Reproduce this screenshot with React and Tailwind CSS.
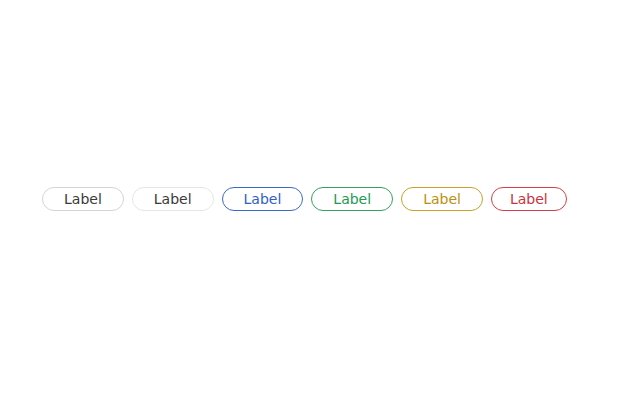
import React from "react";

const pills = [
  { cls: "border-[#d4d4d4] text-[#3a3a3a] px-[21px]" },
  { cls: "border-[#e6e6e6] text-[#3a3a3a] px-[21px]" },
  { cls: "border-[#3a69c6] text-[#3062c2] px-[21px]" },
  { cls: "border-[#34a160] text-[#229a54] px-[21px]" },
  { cls: "border-[#c9a12a] text-[#bb900f] px-[21px]" },
  { cls: "border-[#cf4049] text-[#c8343e] px-[18px]" },
];

const App = () => {
  return (
    <div
      className="w-[625px] h-[400px] bg-white flex items-center pl-[42px] gap-2"
      style={{ fontFamily: '"DejaVu Sans", sans-serif' }}
    >
      {pills.map((p, idx) => (
        <span
          key={idx}
          className={`border rounded-full text-[14px] leading-[22px] mt-[-2px] ${p.cls}`}
        >
          Label
        </span>
      ))}
    </div>
  );
};

export default App;
